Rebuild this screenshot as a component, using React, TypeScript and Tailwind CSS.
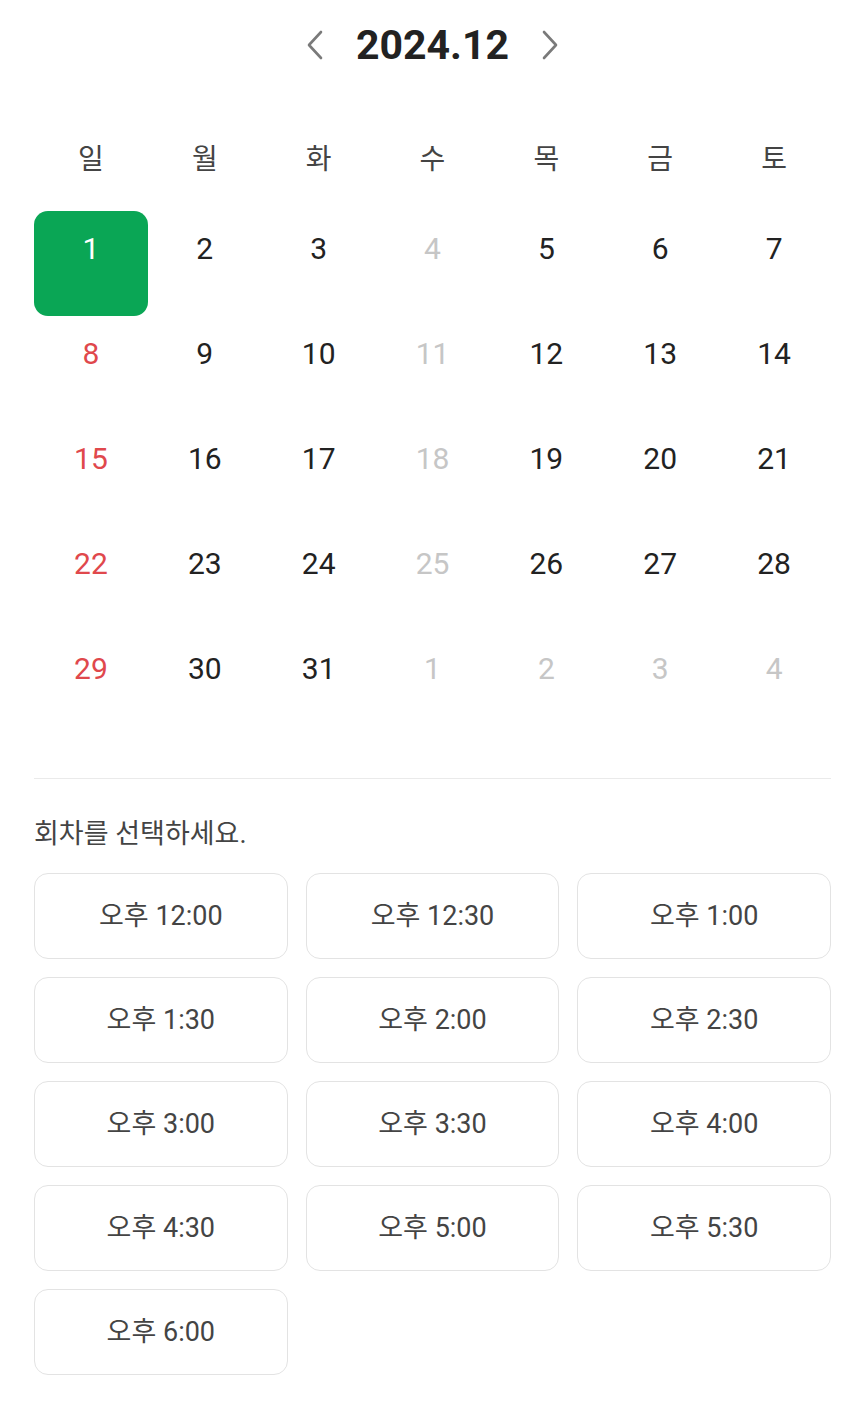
import React from "react";

const FONT = { fontFamily: "Roboto, 'Noto Sans CJK KR', sans-serif" };

type Day = { n: number; kind: "sun" | "normal" | "dim" | "sel" };

const weeks: Day[][] = [
  [1, 2, 3, 4, 5, 6, 7],
  [8, 9, 10, 11, 12, 13, 14],
  [15, 16, 17, 18, 19, 20, 21],
  [22, 23, 24, 25, 26, 27, 28],
  [29, 30, 31, 1, 2, 3, 4],
].map((row, ri) =>
  row.map((n, ci) => {
    let kind: Day["kind"] = "normal";
    if (ri === 0 && ci === 0) kind = "sel";
    else if (ri === 4 && ci >= 3) kind = "dim";
    else if (ci === 3) kind = "dim";
    else if (ci === 0) kind = "sun";
    return { n, kind };
  })
);

const times = [
  "오후 12:00",
  "오후 12:30",
  "오후 1:00",
  "오후 1:30",
  "오후 2:00",
  "오후 2:30",
  "오후 3:00",
  "오후 3:30",
  "오후 4:00",
  "오후 4:30",
  "오후 5:00",
  "오후 5:30",
  "오후 6:00",
];

function Chevron({ dir }: { dir: "left" | "right" }) {
  return (
    <svg width="18" height="30" viewBox="0 0 18 30" fill="none">
      <path
        d={dir === "left" ? "M15 2 L3 15 L15 28" : "M3 2 L15 15 L3 28"}
        stroke="#7a7a7a"
        strokeWidth="2.6"
        strokeLinecap="round"
        strokeLinejoin="round"
      />
    </svg>
  );
}

export default function App() {
  return (
    <div className="min-h-[1427px] w-[864px] bg-white pl-[34px] pr-[33px]" style={FONT}>
      <div className="flex h-[90px] items-center justify-center gap-[32px]">
        <Chevron dir="left" />
        <div className="text-[41px] font-bold leading-none text-[#222]">2024.12</div>
        <Chevron dir="right" />
      </div>

      <div className="mt-[50px] grid grid-cols-7">
        {["일", "월", "화", "수", "목", "금", "토"].map((d) => (
          <div key={d} className="h-[40px] text-center text-[28px] leading-[40px] text-[#444]">
            {d}
          </div>
        ))}
      </div>

      <div className="mt-[31px] grid grid-cols-7">
        {weeks.flat().map((d, i) => (
          <div
            key={i}
            className={
              "flex h-[105px] justify-center pt-[22px] text-[30px] leading-[32px] " +
              (d.kind === "sel"
                ? "rounded-[14px] bg-[#0aa655] text-white"
                : d.kind === "sun"
                ? "text-[#e0484c]"
                : d.kind === "dim"
                ? "text-[#c6c6c6]"
                : "text-[#222]")
            }
          >
            {d.n}
          </div>
        ))}
      </div>

      <div className="mt-[42px] h-px bg-[#eaeaea]" />

      <div className="mt-[40px] text-[27px] leading-[30px] text-[#444]">회차를 선택하세요.</div>

      <div className="mt-[24px] grid grid-cols-3 gap-[18px]">
        {times.map((t) => (
          <div
            key={t}
            className="flex h-[86px] items-center justify-center rounded-[14px] border border-[#e3e3e3] text-[27px] text-[#444]"
          >
            {t}
          </div>
        ))}
      </div>
    </div>
  );
}
